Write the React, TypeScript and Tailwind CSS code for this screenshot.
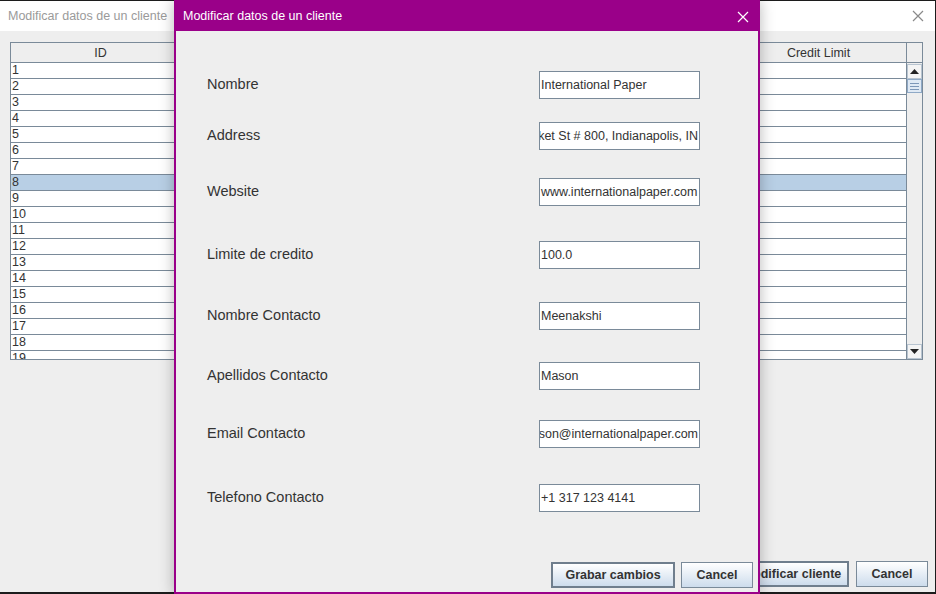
import { ReactNode } from 'react';

const font = "font-['Liberation_Sans',Arial,sans-serif]";

const fields = [
  { label: 'Nombre', value: 'International Paper', mt: 'mt-[40px]' },
  { label: 'Address', value: '6400 Poplar Ave, 500 Market St # 800, Indianapolis, IN', mt: 'mt-[23px]', end: true },
  { label: 'Website', value: 'www.internationalpaper.com', mt: 'mt-[28px]' },
  { label: 'Limite de credito', value: '100.0', mt: 'mt-[35px]' },
  { label: 'Nombre Contacto', value: 'Meenakshi', mt: 'mt-[33px]' },
  { label: 'Apellidos Contacto', value: 'Mason', mt: 'mt-[32px]' },
  { label: 'Email Contacto', value: 'meenakshi.mason@internationalpaper.com', mt: 'mt-[30px]', end: true },
  { label: 'Telefono Contacto', value: '+1 317 123 4141', mt: 'mt-[36px]' },
];

function CloseIcon({ color }: { color: string }) {
  return (
    <svg width="12" height="12" viewBox="0 0 12 12">
      <path d="M1 1 L11 11 M11 1 L1 11" stroke={color} strokeWidth="1.2" fill="none" />
    </svg>
  );
}

function SwingButton({ children, width, focused = false }: { children: ReactNode; width: string; focused?: boolean }) {
  return (
    <div
      className={`${width} h-[26px] flex items-center justify-center bg-gradient-to-b from-white to-[#cddcec] text-[12.5px] font-bold text-[#333] ${
        focused ? 'border-2 border-[#6f7e8d]' : 'border border-[#7a8a99]'
      }`}
    >
      {children}
    </div>
  );
}

function Arrow({ up }: { up?: boolean }) {
  return (
    <svg width="9" height="5" viewBox="0 0 9 5">
      {up ? <path d="M0 5 L4.5 0 L9 5 Z" fill="#222" /> : <path d="M0 0 L9 0 L4.5 5 Z" fill="#222" />}
    </svg>
  );
}

export default function App() {
  const rows = Array.from({ length: 19 }, (_, i) => i + 1);

  return (
    <div className={`${font} relative w-[936px] h-[594px] bg-[#eeeeee] border-t border-r border-b-2 border-[#1c1c1c] flex flex-col`}>
      {/* background window title */}
      <div className="h-[30px] bg-white flex items-center justify-between pl-[8px] pr-[11px] shrink-0">
        <span className="text-[12.5px] text-[#9a9a9a]">Modificar datos de un cliente</span>
        <CloseIcon color="#8a8a8a" />
      </div>

      {/* table */}
      <div className="ml-[10px] mt-[11px] w-[913px] h-[318px] border border-[#7a8a99] flex flex-col bg-white">
        <div className="h-[20px] flex border-b border-[#7a8a99] bg-[#eeeeee] text-[12.5px] text-[#333]">
          <div className="w-[180px] flex items-center justify-center pt-[2px] border-r border-[#7a8a99]">ID</div>
          <div className="flex-1 border-r border-[#7a8a99]" />
          <div className="w-[176px] flex items-center justify-center pt-[2px] border-r border-[#7a8a99]">Credit Limit</div>
          <div className="w-[15px]" />
        </div>
        <div className="flex-1 flex overflow-hidden">
          <div className="flex-1 overflow-hidden border-r border-[#7a8a99]">
            {rows.map((n) => (
              <div
                key={n}
                className={`h-[16px] border-b border-[#7a8a99] text-[12.5px] leading-[15px] text-[#333] pl-[1px] ${
                  n === 8 ? 'bg-[#b8cfe5]' : 'bg-white'
                }`}
              >
                {n}
              </div>
            ))}
          </div>
          <div className="w-[15px] bg-[#eeeeee] flex flex-col">
            <div className="h-[15px] mt-[1px] border border-[#b8c4d0] bg-[#f4f4f4] flex items-center justify-center">
              <Arrow up />
            </div>
            <div className="h-[14px] border border-[#8fa9c6] bg-[#dfe9f4] flex flex-col items-center justify-center gap-[2px]">
              <div className="w-[9px] h-[1px] bg-[#7d97b8]" />
              <div className="w-[9px] h-[1px] bg-[#7d97b8]" />
              <div className="w-[9px] h-[1px] bg-[#7d97b8]" />
            </div>
            <div className="flex-1" />
            <div className="h-[15px] border border-[#b8c4d0] bg-[#f4f4f4] flex items-center justify-center">
              <Arrow />
            </div>
          </div>
        </div>
      </div>

      {/* background buttons */}
      <div className="mt-auto mb-[5px] flex justify-end gap-[7px] pr-[7px]">
        <SwingButton width="w-[114px]" focused>Modificar cliente</SwingButton>
        <SwingButton width="w-[72px]">Cancel</SwingButton>
      </div>

      {/* dialog */}
      <div className="absolute left-[174px] top-[-1px] w-[586px] h-[594px] border-2 border-[#9a0089] bg-[#eeeeee] flex flex-col shadow-[0_0_14px_rgba(0,0,0,0.28)]">
        <div className="h-[29px] -mt-[2px] pt-[2px] bg-[#9a0089] flex items-center justify-between pl-[7px] pr-[9px] shrink-0 box-content">
          <span className="text-[12.5px] text-white">Modificar datos de un cliente</span>
          <CloseIcon color="#ffffff" />
        </div>
        <div className="flex-1 flex flex-col">
          {fields.map((f) => (
            <div key={f.label} className={`${f.mt} flex items-center pl-[31px] h-[28px]`}>
              <div className="w-[332px] text-[14.5px] text-[#333] -mt-[1px]">{f.label}</div>
              <div
                className={`w-[161px] h-[28px] bg-white border border-[#7a8a99] flex items-center overflow-hidden px-[1px] pt-[1px] ${
                  f.end ? 'justify-end' : ''
                }`}
              >
                <span className="text-[12.5px] text-[#333] whitespace-nowrap">{f.value}</span>
              </div>
            </div>
          ))}
          <div className="mt-auto mb-[4px] flex justify-end gap-[6px] pr-[5px]">
            <SwingButton width="w-[124px]" focused>Grabar cambios</SwingButton>
            <SwingButton width="w-[72px]">Cancel</SwingButton>
          </div>
        </div>
      </div>
    </div>
  );
}
